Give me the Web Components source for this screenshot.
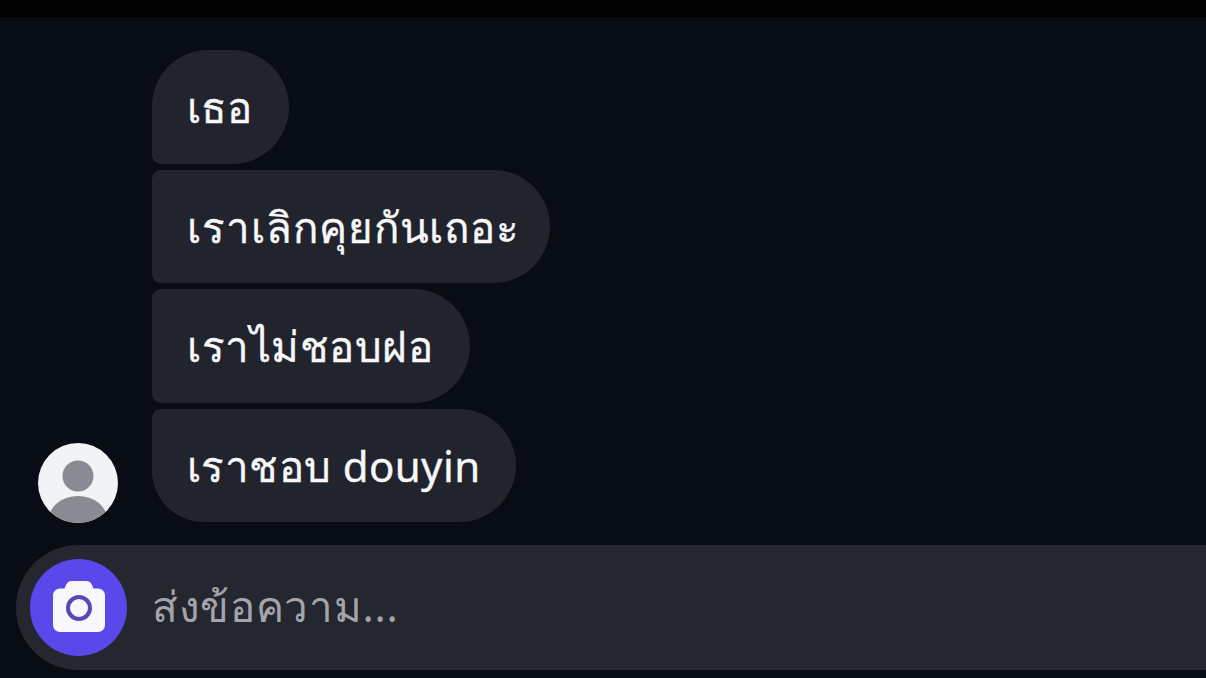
<!DOCTYPE html>
<html lang="th">
<head>
<meta charset="utf-8">
<style>
  html, body { margin: 0; height: 100%; background: #080d15; }
  body { overflow: hidden; font-family: "Noto Sans", "Noto Sans CJK SC", sans-serif; }
</style>
</head>
<body>
<chat-screen>
  <chat-bubble corners="first" end="37" spacing="0">เธอ</chat-bubble>
  <chat-bubble corners="mid" end="30" spacing=".95">เราเลิกคุยกันเถอะ</chat-bubble>
  <chat-bubble corners="mid" end="36" spacing=".55">เราไม่ชอบฝอ</chat-bubble>
  <chat-bubble corners="last" end="35" spacing=".4">เราชอบ douyin</chat-bubble>
</chat-screen>
<script>
  class ChatBubble extends HTMLElement {
    constructor() {
      super();
      const root = this.attachShadow({ mode: 'open' });
      const c = this.getAttribute('corners');
      const end = this.getAttribute('end') || 36;
      const spacing = this.getAttribute('spacing') || 0;
      const r = c === 'first' ? '56px 57px 57px 9px'
              : c === 'last' ? '9px 57px 57px 52px'
              : '9px 57px 57px 9px';
      root.innerHTML =
        '<style>:host{display:block;width:fit-content}' +
        '.b{box-sizing:border-box;height:113.5px;padding:3px ' + end + 'px 0 35px;display:flex;align-items:center;' +
        'background:#21242d;color:#f6f7f8;font-size:42px;letter-spacing:' + spacing + 'px;-webkit-text-stroke:.35px #f6f7f8;' +
        'white-space:nowrap;border-radius:' + r + '}</style>' +
        '<div class="b"><slot></slot></div>';
    }
  }
  class ChatAvatar extends HTMLElement {
    constructor() {
      super();
      this.attachShadow({ mode: 'open' }).innerHTML =
        '<style>:host{display:block;width:80px;height:80px;margin-bottom:-1px}svg{display:block}</style>' +
        '<svg width="80" height="80" viewBox="0 0 80 80"><defs><clipPath id="c"><circle cx="40" cy="40" r="40"/></clipPath></defs>' +
        '<circle cx="40" cy="40" r="40" fill="#f1f3f7"/>' +
        '<g clip-path="url(#c)" fill="#888b94"><circle cx="40" cy="33" r="15.500"/><ellipse cx="40" cy="76" rx="29" ry="23"/></g></svg>';
    }
  }
  class ChatComposer extends HTMLElement {
    constructor() {
      super();
      this.attachShadow({ mode: 'open' }).innerHTML =
        '<style>:host{display:flex;align-items:center;gap:25px;height:125px;margin-left:16px;padding-left:14px;' +
        'background:#24272f;border-radius:62px 0 0 62px}' +
        '.cam{width:97px;height:97px;border-radius:50%;background:#5a48ea;display:flex;align-items:center;justify-content:center;flex:none}' +
        '.cam svg{margin-top:-3px}' +
        '.ph{color:#a3a5ab;font-size:42px;letter-spacing:.7px;position:relative;top:-1px}</style>' +
        '<div class="cam"><svg width="54" height="53" viewBox="0 0 54 53">' +
        '<path d="M20 1h14c3 0 5 1.500 6 4l1.500 3.500H46a7 7 0 0 1 7 7V45a7 7 0 0 1-7 7H8a7 7 0 0 1-7-7V15.500a7 7 0 0 1 7-7h4.500L14 5c1-2.500 3-4 6-4z" fill="#f8f7fb"/>' +
        '<circle cx="27" cy="28" r="11" fill="none" stroke="#5a48b4" stroke-width="4"/></svg></div>' +
        '<span class="ph">ส่งข้อความ...</span>';
    }
  }
  class ChatScreen extends HTMLElement {
    constructor() {
      super();
      this.attachShadow({ mode: 'open' }).innerHTML =
        '<style>:host{display:flex;flex-direction:column;box-sizing:border-box;width:1206px;height:678px;background:#080d15}' +
        '.top{height:17px;background:#000;flex:none}' +
        '.thread{display:flex;align-items:flex-end;gap:34px;padding:33px 0 0 38px;flex:none}' +
        '.stack{display:flex;flex-direction:column;gap:6px}' +
        '.foot{margin-top:23px}</style>' +
        '<div class="top"></div>' +
        '<div class="thread"><chat-avatar></chat-avatar><div class="stack"><slot></slot></div></div>' +
        '<div class="foot"><chat-composer></chat-composer></div>';
    }
  }
  customElements.define('chat-bubble', ChatBubble);
  customElements.define('chat-avatar', ChatAvatar);
  customElements.define('chat-composer', ChatComposer);
  customElements.define('chat-screen', ChatScreen);
</script>
</body>
</html>
